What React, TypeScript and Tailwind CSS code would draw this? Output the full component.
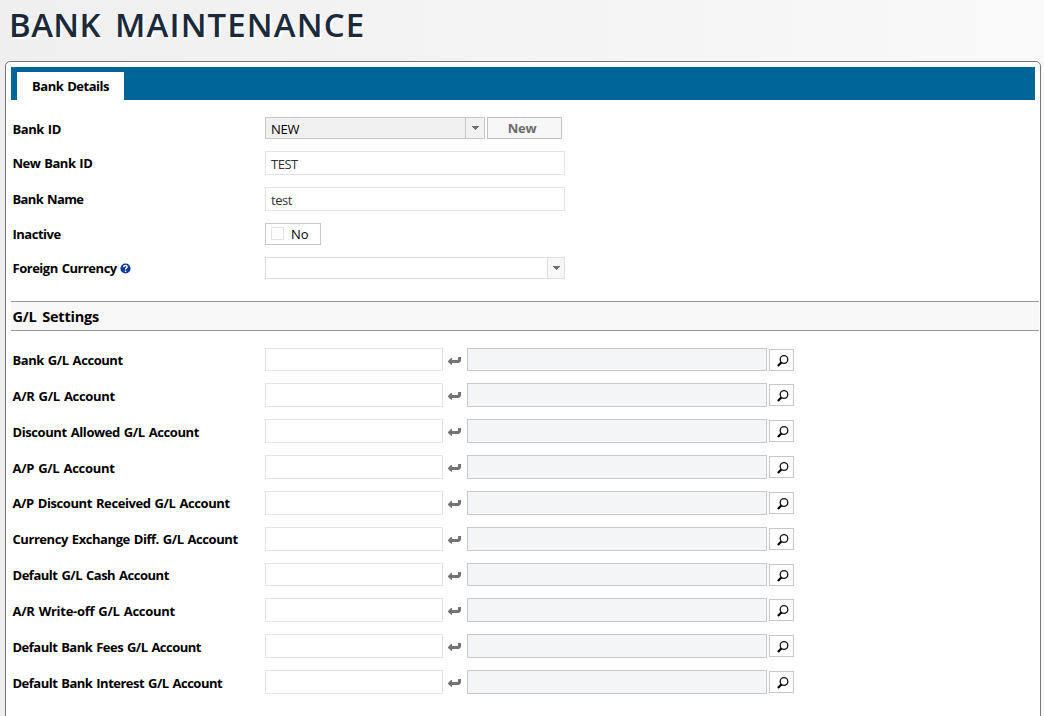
const rows = [
  { label: 'Bank G/L Account', row: 'h-[35px]', box: 'h-[23px]', text: 'pt-px tracking-[-0.44px]' },
  { label: 'A/R G/L Account', row: 'h-9', box: 'h-6', text: 'pt-0.5 tracking-[-0.3px]' },
  { label: 'Discount Allowed G/L Account', row: 'h-9', box: 'h-6', text: 'pt-0.5 tracking-[-0.41px]' },
  { label: 'A/P G/L Account', row: 'h-9', box: 'h-6', text: 'pt-0.5 tracking-[-0.3px]' },
  { label: 'A/P Discount Received G/L Account', row: 'h-9', box: 'h-6', text: 'pt-px tracking-[-0.41px]' },
  { label: 'Currency Exchange Diff. G/L Account', row: 'h-9', box: 'h-6', text: 'pt-px tracking-[-0.44px]' },
  { label: 'Default G/L Cash Account', row: 'h-[35px]', box: 'h-[23px]', text: 'pt-px tracking-[-0.48px]' },
  { label: 'A/R Write-off G/L Account', row: 'h-9', box: 'h-6', text: 'pt-0.5 tracking-[-0.28px]' },
  { label: 'Default Bank Fees G/L Account', row: 'h-9', box: 'h-6', text: 'pt-0.5 tracking-[-0.51px]' },
  { label: 'Default Bank Interest G/L Account', row: 'h-9', box: 'h-6', text: 'pt-0.5 tracking-[-0.5px]' },
];

function Label({ children, className }: { children: React.ReactNode; className: string }) {
  return (
    <div className={`w-[252px] shrink-0 ${className}`}>
      <div className="-ml-[0.5px] flex h-6 items-center whitespace-nowrap text-[13px] font-bold text-black [word-spacing:1px]">
        {children}
      </div>
    </div>
  );
}

function Caret() {
  return (
    <svg width="7" height="4" viewBox="0 0 7 4" shapeRendering="crispEdges">
      <path d="M0 0h7v1H6v1H5v1H4v1H3V3H2V2H1V1H0z" fill="#707070" />
    </svg>
  );
}

function EnterIcon() {
  return (
    <svg width="13" height="8" viewBox="0 0 13 8" className="mt-[9px] mr-0.5 shrink-0">
      <path d="M10 0h3v4l-1 1l-1 1H4v2H3.5L0 5V4l3-3h1v2h5.5L10 2.5z" fill="#747474" />
    </svg>
  );
}

function SearchIcon() {
  return (
    <svg width="12" height="12" viewBox="0 0 12 12" className="mt-px ml-0.5">
      <circle cx="7" cy="4.5" r="3.8" fill="white" stroke="#111" strokeWidth="1.3" />
      <path d="M4.3 7.4L0.9 10.9" stroke="#000" strokeWidth="2.2" />
    </svg>
  );
}

export default function App() {
  return (
    <div className="h-[716px] w-[1044px] overflow-hidden bg-linear-to-r from-[#efefef] via-[#f4f4f4] to-[#f9f9f9] font-['Open_Sans','Noto_Sans',sans-serif]">
      <header className="h-[61px] pl-[9px]">
        <h1 className="pt-[2px] text-[33px] leading-[46px] font-semibold tracking-[1.1px] whitespace-nowrap text-[#1b2a3a] [text-shadow:2px_2px_1px_#fff]">
          <span className="tracking-[0.4px] [word-spacing:5px]">BANK </span>MAINTENANCE
        </h1>
      </header>
      <main className="ml-[5px] h-[670px] w-[1036px] rounded-[5px] border border-[#77777a] bg-white pt-[5px] pl-[5px]">
        <nav className="flex h-[33px] w-[1024px] items-end bg-[#006699] pl-[6px]">
          <div className="flex h-7 w-[107px] items-center justify-center bg-white pt-0.5 text-[13px] font-bold tracking-[-0.5px] whitespace-nowrap text-black [word-spacing:1px]">
            Bank Details
          </div>
        </nav>
        <section className="h-[201px] pt-[17px] pl-[2px]">
          <div className="flex h-[34px] items-start">
            <Label className="pt-px tracking-[-0.44px]">Bank ID</Label>
            <div className="flex h-[22px] w-[220px] border border-[#c8c8c8] bg-[#f0f0f0]">
              <div className="flex-1 pl-[5px] text-[13px] leading-[22px] tracking-[-0.2px] text-black">NEW</div>
              <div className="flex w-[19px] items-center justify-center border-l border-[#c8c8c8] bg-[#f2f2f2]"><Caret /></div>
            </div>
            <button className="ml-[2px] h-[22px] w-[75px] border border-[#c1c1c1] bg-[#f7f7f7] pr-[5px] text-[13px] leading-5 font-bold tracking-[-0.3px] text-[#6c6c6c]">New</button>
          </div>
          <div className="flex h-9 items-start">
            <Label className="pt-px tracking-[-0.5px]">New Bank ID</Label>
            <div className="h-6 w-[300px] border border-[#e3e3e3] pl-[5px] text-[13px] leading-6 tracking-[-0.5px] text-[#333]">TEST</div>
          </div>
          <div className="flex h-9 items-start">
            <Label className="pt-px tracking-[-0.62px]">Bank Name</Label>
            <div className="h-6 w-[300px] border border-[#e3e3e3] pl-[5px] text-[13px] leading-6 tracking-[-0.5px] text-[#333]">test</div>
          </div>
          <div className="flex h-[34px] items-start">
            <Label className="tracking-[-0.5px]">Inactive</Label>
            <div className="flex h-[22px] w-14 items-start border border-[#c8c8c8]">
              <span className="mt-[3px] ml-[5px] size-[13px] border border-[#e3e3e3]" />
              <span className="ml-[7px] text-[13px] leading-5 text-black">No</span>
            </div>
          </div>
          <div className="flex items-start">
            <Label className="tracking-[-0.48px]">
              Foreign Currency
              <svg width="11" height="11" viewBox="0 0 11 11" className="mb-px ml-[3.5px]">
                <circle cx="5.5" cy="5.5" r="5.1" fill="#1238a0" />
                <path d="M3.6 4.1C3.9 1.9 7.4 2 7.1 4.1C6.9 5 5.5 5.1 5.5 6.4M5.5 7.5v1.4" fill="none" stroke="#fff" strokeWidth="1.4" />
              </svg>
            </Label>
            <div className="flex h-[22px] w-[300px] border border-[#dedede]">
              <div className="flex-1" />
              <div className="flex w-[17px] items-center justify-center border-l border-[#dedede] bg-[#f7f7f7] pl-px"><Caret /></div>
            </div>
          </div>
        </section>
        <h2 className="h-[30px] w-[1028px] border-y border-[#999] bg-[#f8f8f8] pl-[1.5px] text-[14.5px] leading-[29px] font-bold tracking-[-0.2px] text-black [word-spacing:2px]">
          G/L Settings
        </h2>
        <section className="pt-[17px] pl-[2px]">
          {rows.map((r) => (
            <div key={r.label} className={`flex items-start ${r.row}`}>
              <Label className={r.text}>{r.label}</Label>
              <div className={`w-[178px] border border-[#e3e3e3] ${r.box}`} />
              <div className="flex w-6 justify-center"><EnterIcon /></div>
              <div className={`w-[300px] border border-[#c8c8c8] bg-[#f4f5f7] ${r.box}`} />
              <div className="mt-px ml-[2px] flex h-[22px] w-[25px] items-center justify-center border border-[#c8c8c8]"><SearchIcon /></div>
            </div>
          ))}
        </section>
      </main>
    </div>
  );
}
